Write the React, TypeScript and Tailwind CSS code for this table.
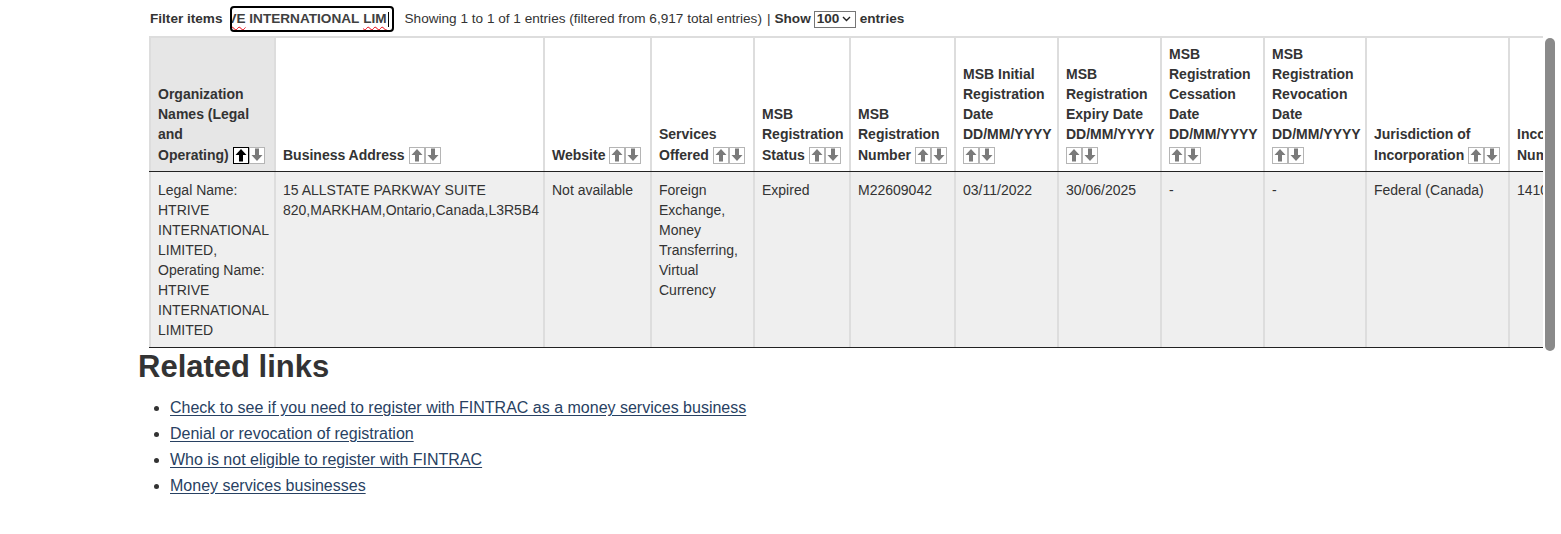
import type { ReactNode } from "react";

type Col = {
    width: string;
    head: string[];
    iconsInline: boolean;
    active?: boolean;
    body: string[];
};

const COLS: Col[] = [
    {
        width: "w-[125px]",
        head: ["Organization", "Names (Legal", "and", "Operating)"],
        iconsInline: true,
        active: true,
        body: [
            "Legal Name:",
            "HTRIVE",
            "INTERNATIONAL",
            "LIMITED,",
            "Operating Name:",
            "HTRIVE",
            "INTERNATIONAL",
            "LIMITED",
        ],
    },
    {
        width: "w-[269px]",
        head: ["Business Address"],
        iconsInline: true,
        body: ["15 ALLSTATE PARKWAY SUITE", "820,MARKHAM,Ontario,Canada,L3R5B4"],
    },
    { width: "w-[107px]", head: ["Website"], iconsInline: true, body: ["Not available"] },
    {
        width: "w-[103px]",
        head: ["Services", "Offered"],
        iconsInline: true,
        body: ["Foreign", "Exchange,", "Money", "Transferring,", "Virtual", "Currency"],
    },
    {
        width: "w-[96px]",
        head: ["MSB", "Registration", "Status"],
        iconsInline: true,
        body: ["Expired"],
    },
    {
        width: "w-[105px]",
        head: ["MSB", "Registration", "Number"],
        iconsInline: true,
        body: ["M22609042"],
    },
    {
        width: "w-[103px]",
        head: ["MSB Initial", "Registration", "Date", "DD/MM/YYYY"],
        iconsInline: false,
        body: ["03/11/2022"],
    },
    {
        width: "w-[103px]",
        head: ["MSB", "Registration", "Expiry Date", "DD/MM/YYYY"],
        iconsInline: false,
        body: ["30/06/2025"],
    },
    {
        width: "w-[103px]",
        head: ["MSB", "Registration", "Cessation", "Date", "DD/MM/YYYY"],
        iconsInline: false,
        body: ["-"],
    },
    {
        width: "w-[102px]",
        head: ["MSB", "Registration", "Revocation", "Date", "DD/MM/YYYY"],
        iconsInline: false,
        body: ["-"],
    },
    {
        width: "w-[143px]",
        head: ["Jurisdiction of", "Incorporation"],
        iconsInline: true,
        body: ["Federal (Canada)"],
    },
    {
        width: "w-[150px]",
        head: ["Incorporation", "Number"],
        iconsInline: true,
        body: ["14105975"],
    },
];

const LINKS = [
    "Check to see if you need to register with FINTRAC as a money services business",
    "Denial or revocation of registration",
    "Who is not eligible to register with FINTRAC",
    "Money services businesses",
];

function Arrow({ down = false, on = false }: { down?: boolean; on?: boolean }) {
    return (
        <span
            className={
                on
                    ? "flex h-[17px] w-[16px] items-center justify-center border border-black bg-white"
                    : "flex h-[17px] w-[16px] items-center justify-center border border-[#b5b5b5] bg-white"
            }
        >
            <svg
                width="12"
                height="14"
                viewBox="0 0 12 14"
                className={down ? "rotate-180" : ""}
            >
                <path
                    d="M6 1 L11.5 7 H8 V13.5 H4 V7 H0.5 Z"
                    fill={on ? "#000" : "#7a7a7a"}
                />
            </svg>
        </span>
    );
}

function SortIcons({ active = false }: { active?: boolean }) {
    return (
        <span className="inline-flex items-center">
            <Arrow on={active} />
            <Arrow down />
        </span>
    );
}

function HeadCell({ col, first }: { col: Col; first: boolean }) {
    const last = col.head.length - 1;
    return (
        <div
            className={`${col.width} flex shrink-0 flex-col justify-end border-l-2 border-[#dddddd] pb-[5px] pl-[7px] font-bold ${
                first ? "bg-[#e6e6e6]" : "bg-white"
            }`}
        >
            {col.head.map((line, i) =>
                i === last && col.iconsInline ? (
                    <div key={i} className="flex h-[22px] items-center gap-[4px] whitespace-nowrap">
                        <span>{line}</span>
                        <SortIcons active={col.active} />
                    </div>
                ) : (
                    <div key={i} className="h-[20px] whitespace-nowrap">
                        {line}
                    </div>
                ),
            )}
            {!col.iconsInline && (
                <div className="flex h-[22px] items-center">
                    <SortIcons />
                </div>
            )}
        </div>
    );
}

function BodyCell({ col }: { col: Col }) {
    return (
        <div
            className={`${col.width} shrink-0 border-l-2 border-[#dddddd] pt-[8px] pb-[7px] pl-[7px]`}
        >
            {col.body.map((line, i) => (
                <div key={i} className="h-[20px] whitespace-nowrap">
                    {line}
                </div>
            ))}
        </div>
    );
}

function Squiggle({ children }: { children: ReactNode }) {
    return (
        <span className="underline decoration-red-600 decoration-wavy decoration-1 underline-offset-[3px]">
            {children}
        </span>
    );
}

export default function App() {
    return (
        <div className="relative h-[534px] w-[1561px] overflow-hidden bg-white font-['Liberation_Sans',Arial,sans-serif] text-[#333333]">
            <div className="ml-[138px]">
                <div className="ml-[11px]">
                    {/* filter bar */}
                    <div className="flex h-[36px] items-start pt-[6px] pl-[1px] text-[13.6px]">
                        <div className="flex h-[26px] items-center">
                            <span className="font-bold">Filter items</span>
                            <div className="ml-[7px] flex h-[26px] w-[164px] shrink-0 items-center justify-end overflow-hidden rounded-[4px] border-2 border-black pr-[3px] font-bold whitespace-nowrap text-[#404040]">
                                <Squiggle>VE</Squiggle>
                                <span>&nbsp;INTERNATIONAL&nbsp;</span>
                                <Squiggle>LIM</Squiggle>
                                <span className="ml-[1px] h-[15px] w-px shrink-0 bg-black" />
                            </div>
                            <span className="ml-[11px]">
                                Showing 1 to 1 of 1 entries (filtered from 6,917 total entries)
                            </span>
                            <span className="ml-[5px]">|</span>
                            <span className="ml-[4px] font-bold">Show</span>
                            <div className="ml-[3px] flex h-[17px] w-[42px] items-center gap-[3px] border border-[#767676] pl-[2px] font-bold">
                                <span>100</span>
                                <svg width="9" height="6" viewBox="0 0 9 6">
                                    <path d="M1 1 L4.5 4.5 L8 1" fill="none" stroke="#222" strokeWidth="1.4" />
                                </svg>
                            </div>
                            <span className="ml-[4px] font-bold">entries</span>
                        </div>
                    </div>

                    {/* table */}
                    <div className="w-[1394px] overflow-hidden text-[14px] leading-[20px]">
                        <div className="w-max border-t-2 border-b border-[#dddddd] border-b-[#222222]">
                            <div className="flex h-[133px]">
                                {COLS.map((c, i) => (
                                    <HeadCell key={i} col={c} first={i === 0} />
                                ))}
                            </div>
                        </div>
                        <div className="flex w-max border-b border-[#222222] bg-[#efefef]">
                            {COLS.map((c, i) => (
                                <BodyCell key={i} col={c} />
                            ))}
                        </div>
                    </div>
                </div>

                {/* related links */}
                <h2 className="mt-[2px] text-[31px] leading-[34px] font-bold text-[#333333]">
                    Related links
                </h2>
                <ul className="mt-[12px] list-disc pl-[32px] text-[16px] leading-[23px]">
                    {LINKS.map((l, i) => (
                        <li key={i} className={i ? "mt-[3px]" : ""}>
                            <a href="#" className="text-[#284162] underline underline-offset-2">
                                {l}
                            </a>
                        </li>
                    ))}
                </ul>
            </div>

            {/* page scrollbar thumb */}
            <div className="absolute top-[38px] left-[1545px] h-[313px] w-[10px] rounded-full bg-[#8a8a8a]" />
        </div>
    );
}
